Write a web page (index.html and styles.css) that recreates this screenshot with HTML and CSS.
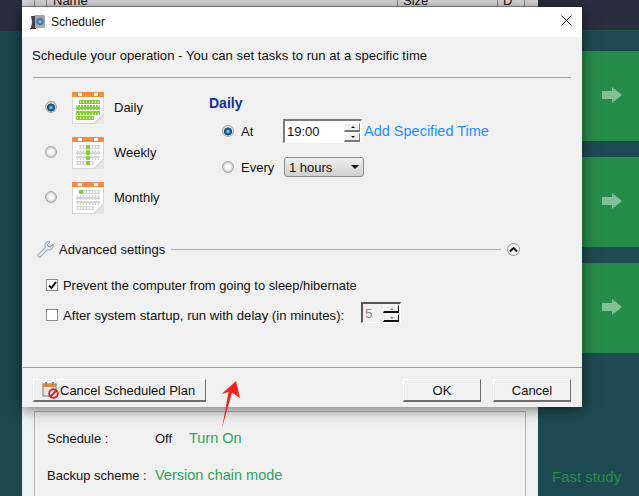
FILE: index.html
```html
<!DOCTYPE html>
<html lang="en">
<head>
<meta charset="utf-8">
<title>Scheduler</title>
<link rel="stylesheet" href="styles.css">
</head>
<body>
<svg class="defs" width="0" height="0">
  <defs>
    <g id="cal-base">
      <rect x="0.5" y="0.5" width="31" height="31" fill="#fff" stroke="#d8d8d8"/>
      <rect x="0" y="0" width="32" height="5" fill="#f08a45"/>
      <rect x="6" y="1" width="4" height="3" fill="#fff"/>
      <rect x="22" y="1" width="4" height="3" fill="#fff"/>
    </g>
    <g id="cal-fold">
      <path d="M22 32 L32 22 V32 Z" fill="#e4e4e4"/>
      <path d="M22 31.5 L31.5 22" stroke="#bdbdbd" fill="none"/>
    </g>
    <pattern id="cell-g" width="3" height="4" patternUnits="userSpaceOnUse"><rect width="3" height="4" fill="#86cc3c"/><rect x="2" y="1" width="1" height="2" fill="#d8efbf"/></pattern>
    <pattern id="cell-l" width="3" height="4" patternUnits="userSpaceOnUse"><rect width="3" height="4" fill="#d6d6d6"/><rect x="0" y="1" width="2" height="2" fill="#f4f4f4"/></pattern>
    <g id="rows-grey">
      <rect x="7" y="8" width="21" height="4" fill="url(#cell-l)"/>
      <rect x="4" y="13" width="24" height="5" fill="url(#cell-l)"/>
      <rect x="4" y="19" width="24" height="4" fill="url(#cell-l)"/>
      <rect x="4" y="24" width="18" height="4" fill="url(#cell-l)"/>
    </g>
  </defs>
</svg>
<div class="desktop">
  <aside class="side"><div class="side-top"></div></aside>
  <main class="center">
    <div class="table-head">
      <span class="th th-a"></span><span class="th th-b"></span>
      <span class="th th-name">Name</span><span class="th th-size">Size</span><span class="th th-d">D</span><span class="th th-e"></span>
    </div>
    <section class="plan-panel">
      <div class="plan-row"><span class="plan-key">Schedule :</span><span class="plan-off">Off</span><span class="plan-link">Turn On</span></div>
      <div class="plan-row plan-row-2"><span class="plan-key">Backup scheme :</span><span class="plan-link">Version chain mode</span></div>
    </section>
  </main>
  <aside class="right">
    <div class="right-top"></div>
    <div class="card"><svg class="arrow" width="20" height="16" viewBox="0 0 20 16"><path d="M0 4 H10 V0 L20 8 L10 16 V12 H0 Z"/></svg></div>
    <div class="card"><svg class="arrow" width="20" height="16" viewBox="0 0 20 16"><path d="M0 4 H10 V0 L20 8 L10 16 V12 H0 Z"/></svg></div>
    <div class="card"><svg class="arrow" width="20" height="16" viewBox="0 0 20 16"><path d="M0 4 H10 V0 L20 8 L10 16 V12 H0 Z"/></svg></div>
    <div class="fast">Fast study</div>
  </aside>
</div>

<div class="dialog">
  <header class="titlebar">
    <svg class="app-icon" width="16" height="16" viewBox="0 0 16 16">
      <rect x="4" y="1" width="11" height="13" rx="1" fill="#a8a8a8"/>
      <path d="M1 2 H5 V14 H1 L2 8 Z" fill="#444"/>
      <circle cx="10" cy="7.500" r="3.800" fill="#3f7fb5"/>
      <circle cx="10" cy="7.500" r="1.600" fill="#8db8da"/>
      <rect x="0" y="14" width="6" height="1" fill="#333"/>
    </svg>
    <span class="title">Scheduler</span>
    <svg class="close" width="11" height="11" viewBox="0 0 11 11"><path d="M0.500 0.500 L10.500 10.500 M10.500 0.500 L0.500 10.500" stroke="#111" fill="none"/></svg>
  </header>
  <div class="body">
    <p class="intro">Schedule your operation - You can set tasks to run at a specific time</p>
    <hr class="rule">
    <div class="sched">
      <div class="freqs">
        <div class="freq">
          <span class="radio on"></span>
          <svg class="cal" width="32" height="32" viewBox="0 0 32 32"><use href="#cal-base"/>
            <rect x="7" y="8" width="21" height="4" fill="url(#cell-g)"/><rect x="4" y="13" width="24" height="5" fill="url(#cell-g)"/><rect x="4" y="19" width="24" height="4" fill="url(#cell-g)"/><rect x="4" y="24" width="18" height="4" fill="url(#cell-g)"/>
            <use href="#cal-fold"/></svg>
          <span class="freq-label">Daily</span>
        </div>
        <div class="freq">
          <span class="radio"></span>
          <svg class="cal" width="32" height="32" viewBox="0 0 32 32"><use href="#cal-base"/><use href="#rows-grey"/>
            <rect x="14" y="8" width="4" height="4" fill="#86cc3c"/><rect x="14" y="13" width="4" height="5" fill="#86cc3c"/><rect x="14" y="19" width="4" height="4" fill="#86cc3c"/><rect x="14" y="24" width="4" height="4" fill="#86cc3c"/>
            <use href="#cal-fold"/></svg>
          <span class="freq-label">Weekly</span>
        </div>
        <div class="freq">
          <span class="radio"></span>
          <svg class="cal" width="32" height="32" viewBox="0 0 32 32"><use href="#cal-base"/><use href="#rows-grey"/>
            <rect x="7" y="8" width="4" height="4" fill="#86cc3c"/>
            <use href="#cal-fold"/></svg>
          <span class="freq-label">Monthly</span>
        </div>
      </div>
      <div class="opts">
        <h2 class="opts-title">Daily</h2>
        <div class="opt opt-at">
          <span class="radio on"></span>
          <span class="opt-label">At</span>
          <span class="time-box">
            <span class="time-val">19:00</span>
            <span class="spin"><span class="spin-btn up"></span><span class="spin-btn down"></span></span>
          </span>
          <span class="add-link">Add Specified Time</span>
        </div>
        <div class="opt opt-every">
          <span class="radio"></span>
          <span class="opt-label">Every</span>
          <span class="select">1 hours<span class="caret"></span></span>
        </div>
      </div>
    </div>
    <div class="adv-head">
      <svg class="wrench" width="17" height="17" viewBox="0 0 17 17"><path d="M16 3.500 L13 6 L11 5.500 L10.500 3.500 L13 1 C10.500 0 8 1.500 8 4.500 C8 5.200 8.200 5.800 8.400 6.300 L1.500 13 C0.500 14 0.800 15.200 1.300 15.700 C2 16.300 3 16.400 3.900 15.500 L10.700 8.700 C13.500 9.700 16.800 7.500 16 3.500 Z" fill="#dfe6ea" stroke="#8a979e"/></svg>
      <span class="adv-text">Advanced settings</span>
      <span class="adv-line"></span>
      <span class="collapse"><svg width="9" height="7" viewBox="0 0 9 7"><path d="M1 5.500 L4.500 2 L8 5.500" fill="none" stroke="#111" stroke-width="2"/></svg></span>
    </div>
    <label class="check-row check-1"><span class="check on"><svg width="9" height="9" viewBox="0 0 9 9"><path d="M1 4.500 L3.500 7 L8 1" fill="none" stroke="#111" stroke-width="2"/></svg></span><span>Prevent the computer from going to sleep/hibernate</span></label>
    <div class="check-row check-2"><span class="check"></span><span>After system startup, run with delay (in minutes):</span>
      <span class="delay-box"><span class="delay-val">5</span><span class="spin spin-dark"><span class="spin-btn up"></span><span class="spin-btn down"></span></span></span>
    </div>
    <div class="footer">
      <button class="btn btn-plan" type="button">
        <svg class="plan-icon" width="17" height="17" viewBox="0 0 17 17"><rect x="1" y="2" width="13" height="12" fill="#e8e8e8" stroke="#777"/><rect x="1" y="2" width="13" height="3" fill="#e8863c"/><rect x="3" y="0" width="2" height="4" fill="#888"/><rect x="10" y="0" width="2" height="4" fill="#888"/><circle cx="11.500" cy="11.500" r="4.300" fill="#fff" stroke="#e0231c" stroke-width="2"/><path d="M8.500 14.500 L14.500 8.500" stroke="#e0231c" stroke-width="2"/></svg>
        <span>Cancel Scheduled Plan</span>
      </button>
      <span class="foot-gap"></span>
      <button class="btn btn-ok" type="button">OK</button>
      <button class="btn btn-ok" type="button">Cancel</button>
    </div>
  </div>
</div>
<svg class="red-arrow" width="22" height="50" viewBox="0 0 22 50"><path d="M15 1 L19 18 L11 12.500 L1 48 L7.500 12 L0.500 14 Z" fill="#f4241a"/></svg>
</body>
</html>
```
FILE: styles.css
```css
* { box-sizing: border-box; }
html, body { margin: 0; padding: 0; }
body {
  position: relative;
  width: 639px;
  height: 496px;
  overflow: hidden;
  font-family: "Liberation Sans", Arial, sans-serif;
  font-size: 12px;
  color: #111;
  background: #1b4a50;
}
.defs { position: absolute; }

/* Application behind the dialog */
.desktop { display: flex; width: 639px; height: 496px; }
.side { width: 22px; background: #1b474d; }
.side-top { height: 31px; background: #2a2d3e; }
.center { width: 516px; background: #f0f0f0; display: flex; flex-direction: column; }
.table-head {
  display: flex;
  flex: none;
  height: 7px;
  background: #dcdcdc;
  border-bottom: 1px solid #8c8c8c;
  overflow: hidden;
  font-size: 13px;
  line-height: 2px;
  padding-left: 12px;
}
.th { border-right: 1px solid #8a8a8a; height: 7px; }
.th-a { width: 1px; }
.th-b { width: 12px; }
.th-name { width: 351px; padding-left: 6px; }
.th-size { width: 100px; padding-left: 5px; }
.th-d { width: 27px; padding-left: 5px; }
.th-e { flex: 1; border-right: 0; }
.plan-panel {
  margin: 404px 0 0 12px;
  width: 492px;
  height: 85px;
  border: 1px solid #b4b4b4;
  border-bottom: 0;
  padding: 18px 12px 0;
  font-size: 13px;
}
.plan-row { display: flex; align-items: center; height: 16px; }
.plan-row-2 { margin-top: 21px; }
.plan-key { width: 108px; white-space: nowrap; }
.plan-off { width: 34px; }
.plan-link { color: #2ea35a; font-size: 14.500px; }

.right { width: 101px; background: #1d4a51; }
.right-top { height: 31px; background: #2a2d3e; border-bottom: 1px solid #26574f; margin-bottom: 20px; }
.card {
  height: 90px;
  margin: 0 0 16px 24px;
  padding-left: 40px;
  background: #268c4a;
  display: flex;
  align-items: center;
}
.arrow { fill: #82c196; margin-top: -2px; }
.fast { color: #268c4a; font-size: 15px; margin: 115px 0 0 14px; white-space: nowrap; }

/* Dialog window */
.dialog {
  position: absolute;
  left: 22px;
  top: 7px;
  width: 560px;
  height: 400px;
  background: #f0f0f0;
  box-shadow: 0 2px 14px rgba(0, 0, 0, .55);
  display: flex;
  flex-direction: column;
}
.titlebar { height: 30px; background: #fff; display: flex; align-items: center; padding-left: 8px; flex: none; }
.app-icon { margin-right: 5px; }
.title { font-size: 12px; }
.close { margin-left: auto; margin-right: 10px; margin-top: -3px; }
.body { flex: 1; display: flex; flex-direction: column; padding: 0 11px 0 0; }
.intro { margin: 12px 0 0 10px; font-size: 13.150px; line-height: 14px; white-space: nowrap; }
.rule { margin: 14px 0 0 11px; border: 0; height: 1px; background: #a0a0a0; }

.sched { display: flex; height: 162px; }
.freqs { width: 187px; padding: 14px 0 0 23px; display: flex; flex-direction: column; gap: 13px; }
.freq { display: flex; align-items: center; height: 32px; }
.freq .radio { margin-right: 15px; margin-top: -2px; }
.cal { flex: none; margin-right: 10px; }
.freq-label { font-size: 13px; margin-top: -2px; }

.radio {
  flex: none;
  width: 12px;
  height: 12px;
  border-radius: 50%;
  background: radial-gradient(circle at 50% 50%, #fafafa 0 30%, #d8d8d8 60%, #a8a8a8 100%);
  border: 1px solid #a6a6a6;
}
.radio.on { background: radial-gradient(circle at 50% 55%, #8fc5e8 0 10%, #1a6496 30%, #124d78 50%, #dcdcdc 58%, #c4c4c4 100%); }

.opts { padding-top: 16px; flex: 1; }
.opts-title { margin: 0; font-size: 14px; line-height: 18px; font-weight: bold; color: #0f2f9e; }
.opt { display: flex; align-items: center; margin-left: 13px; }
.opt-at { height: 24px; margin-top: 7px; }
.opt-every { height: 20px; margin-top: 14px; }
.opt-label { margin-left: 7px; font-size: 13px; }
.opt-at .opt-label { width: 42px; }
.opt-every .opt-label { width: 43px; }
.time-box {
  width: 79px;
  height: 24px;
  background: #fff;
  border: 2px solid #7a7a7a;
  border-right: 1px solid #fff;
  border-bottom: 1px solid #fff;
  display: flex;
  align-items: center;
  font-size: 13px;
  padding-left: 2px;
}
.time-val { flex: 1; }
.spin { width: 16px; display: flex; flex-direction: column; gap: 1px; margin-right: 1px; margin-top: 1px; }
.spin-btn {
  position: relative;
  height: 9px;
  background: #f0f0f0;
  border: 1px solid #fff;
  border-right-color: #777;
  border-bottom: 2px solid #777;
}
.spin-btn::after {
  content: "";
  position: absolute;
  left: 6px;
  top: 2px;
  border-left: 2px solid transparent;
  border-right: 2px solid transparent;
}
.spin-btn.up::after { border-bottom: 2px solid #111; }
.spin-btn.down::after { border-top: 2px solid #111; }
.add-link { margin-left: 2px; color: #1e90ff; font-size: 14.500px; white-space: nowrap; }
.select {
  width: 80px;
  height: 20px;
  border: 1px solid #8a8a8a;
  border-radius: 3px;
  background: linear-gradient(#efefef, #cfcfcf);
  display: flex;
  align-items: center;
  padding-left: 4px;
  font-size: 13px;
  position: relative;
}
.caret {
  margin-left: auto;
  margin-right: 4px;
  border-left: 4px solid transparent;
  border-right: 4px solid transparent;
  border-top: 4px solid #111;
}

.adv-head { display: flex; align-items: center; height: 18px; margin-left: 15px; }
.wrench { flex: none; margin-right: 5px; }
.adv-text { font-size: 13px; white-space: nowrap; margin-right: 6px; }
.adv-line { width: 330px; height: 1px; background: #b0b0b0; flex: none; }
.collapse {
  flex: none;
  width: 13px;
  height: 13px;
  margin-left: 6px;
  border: 1px solid #999;
  border-radius: 50%;
  background: #f8f8f8;
  display: flex;
  align-items: center;
  justify-content: center;
}
.check-row { display: flex; align-items: center; margin-left: 24px; font-size: 12.900px; white-space: nowrap; }
.check-1 { margin-top: 21px; height: 12px; }
.check-2 { margin-top: 18px; height: 12px; font-size: 13.150px; }
.check {
  flex: none;
  width: 12px;
  height: 12px;
  margin-right: 5px;
  background: #fff;
  border: 1px solid #8a8a8a;
  display: flex;
  align-items: center;
  justify-content: center;
}
.delay-box {
  margin-left: 17px;
  width: 40px;
  height: 21px;
  background: #f0f0f0;
  border: 1px solid #fff;
  border-left: 2px solid #555;
  border-top: 2px solid #555;
  display: flex;
  align-items: center;
  padding-left: 2px;
  color: #8a8a8a;
  font-size: 13px;
  margin-top: -5px;
}
.delay-val { flex: 1; }
.spin-dark .spin-btn { border-bottom-color: #111; border-right-color: #111; height: 8px; }
.spin-dark .spin-btn.up::after { border-bottom-color: #888; }
.spin-dark .spin-btn.down::after { border-top-color: #888; }

.footer {
  margin-top: 46px;
  margin-right: -11px;
  border-top: 1px solid #a0a0a0;
  margin-left: 1px;
  padding: 11px 11px 0 10px;
  display: flex;
  gap: 12px;
}
.foot-gap { flex: 1; }
.btn {
  height: 23px;
  padding: 0;
  background: #f0f0f0;
  border: 1px solid #fff;
  border-right: 1px solid #6e6e6e;
  border-bottom: 2px solid #6e6e6e;
  font: inherit;
  font-size: 13px;
  color: #111;
  display: flex;
  align-items: center;
  justify-content: center;
}
.btn-plan { width: 173px; padding-left: 8px; justify-content: flex-start; }
.plan-icon { margin-right: 1px; }
.btn-ok { width: 78px; }

.red-arrow { position: absolute; left: 221px; top: 380px; }
```
